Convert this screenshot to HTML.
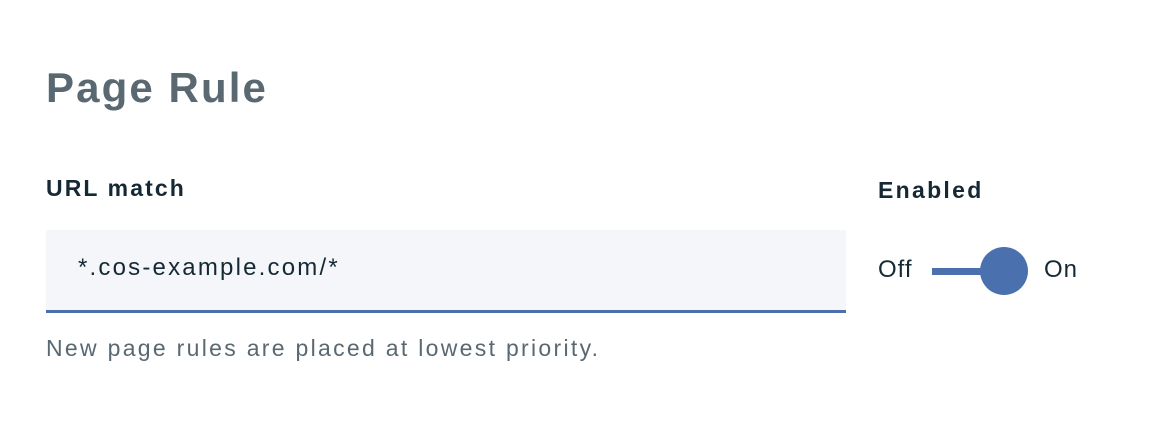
<!DOCTYPE html>
<html><head><style>
body{margin:0;width:1168px;height:424px;background:#fff;font-family:"Liberation Sans",sans-serif;position:relative;overflow:hidden}
div,span{position:absolute;white-space:nowrap}
</style></head><body>
<div style="left:46px;top:64px;font-size:42px;font-weight:bold;color:#5a6872;letter-spacing:2.1px">Page Rule</div>
<div style="left:46px;top:175px;font-size:23px;font-weight:bold;color:#152935;letter-spacing:2.1px">URL match</div>
<div style="left:878px;top:177px;font-size:23px;font-weight:bold;color:#152935;letter-spacing:2.3px">Enabled</div>
<div style="left:46px;top:230px;width:800px;height:80px;background:#f4f6f9;border-bottom:3px solid #4a70ad"></div>
<div style="left:78px;top:254px;font-size:24px;color:#152935;letter-spacing:2.2px">*.cos-example.com/*</div>
<div style="left:46px;top:335px;font-size:23px;color:#5a6872;letter-spacing:2.3px">New page rules are placed at lowest priority.</div>
<div style="left:878px;top:256px;font-size:24px;color:#152935;letter-spacing:1px">Off</div>
<div style="left:932px;top:268px;width:60px;height:7px;background:#4a70ad"></div>
<div style="left:980px;top:247px;width:48px;height:48px;border-radius:50%;background:#4a70ad"></div>
<div style="left:1044px;top:256px;font-size:24px;color:#152935;letter-spacing:1px">On</div>
</body></html>
